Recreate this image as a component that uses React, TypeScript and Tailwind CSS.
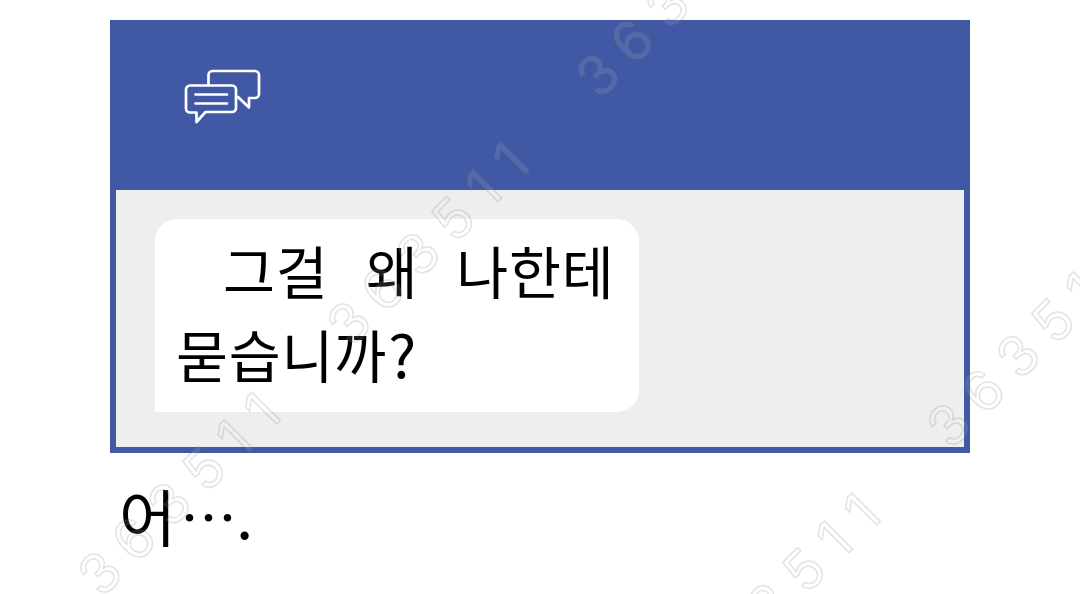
const STAMPS = [
  { x: 348, y: 322 },
  { x: 99, y: 572 },
  { x: 597, y: 74 },
  { x: 948, y: 424 },
  { x: 699, y: 673 },
]

function ChatIcon() {
  return (
    <svg width="78" height="58" viewBox="0 0 78 58" fill="none" stroke="white" strokeWidth="2.7" strokeLinejoin="round" strokeLinecap="round">
      <path d="M25.500 16.500V7a4 4 0 0 1 4-4h42.500a4 4 0 0 1 4 4v19a4 4 0 0 1-4 4H66v9.500L55 29" />
      <path d="M7 17.500h42a4 4 0 0 1 4 4v18.500a4 4 0 0 1-4 4H22.500L13.500 54v-9.500h-6.500a4 4 0 0 1-4-4V21.500a4 4 0 0 1 4-4Z" />
      <path d="M12.500 26.500h31.500M12.500 35.500h31.500" />
    </svg>
  )
}

function Watermark() {
  return (
    <svg className="absolute inset-0 pointer-events-none" width="1080" height="594">
      {STAMPS.map((s) => (
        <text
          key={`${s.x}-${s.y}`}
          transform={`translate(${s.x} ${s.y}) rotate(-45)`}
          x="0 48 98 147 190 229"
          y="21"
          textAnchor="middle"
          className="font-['Inter'] font-normal text-[55px] fill-white/10 stroke-[#777777]/20 stroke-[1.6px]"
        >
          363511
        </text>
      ))}
    </svg>
  )
}

export default function App() {
  return (
    <div className="relative w-[1080px] h-[594px] overflow-hidden bg-white px-[110px] pt-5 font-['Noto_Sans_CJK_KR',sans-serif] text-black">
      <div className="h-[433px] border-6 border-t-0 border-[#4158a4] bg-[#eeeeee]">
        <div className="h-[170px] bg-[#4158a4] pl-[67px] pt-[48px]">
          <ChatIcon />
        </div>
        <div className="pl-[39px] pt-[29px]">
          <div className="w-[484px] h-[193px] rounded-[22px] rounded-bl-none bg-white pl-[21px] pt-[8px] text-[56.5px] leading-[84px] tracking-[0.8px] whitespace-nowrap">
            <p className="pl-[47px] [word-spacing:24px]">그걸 왜 나한테</p>
            <p>묻습니까<span className="pl-px text-[59px] leading-none">?</span></p>
          </div>
        </div>
      </div>
      <p className="pl-[9px] pt-[17px] text-[62px] leading-[90px]">
        어<span className="relative -top-[3px] left-[4px]"><span className="text-[57px] tracking-[-1px]">…</span>.</span>
      </p>
      <Watermark />
    </div>
  )
}
